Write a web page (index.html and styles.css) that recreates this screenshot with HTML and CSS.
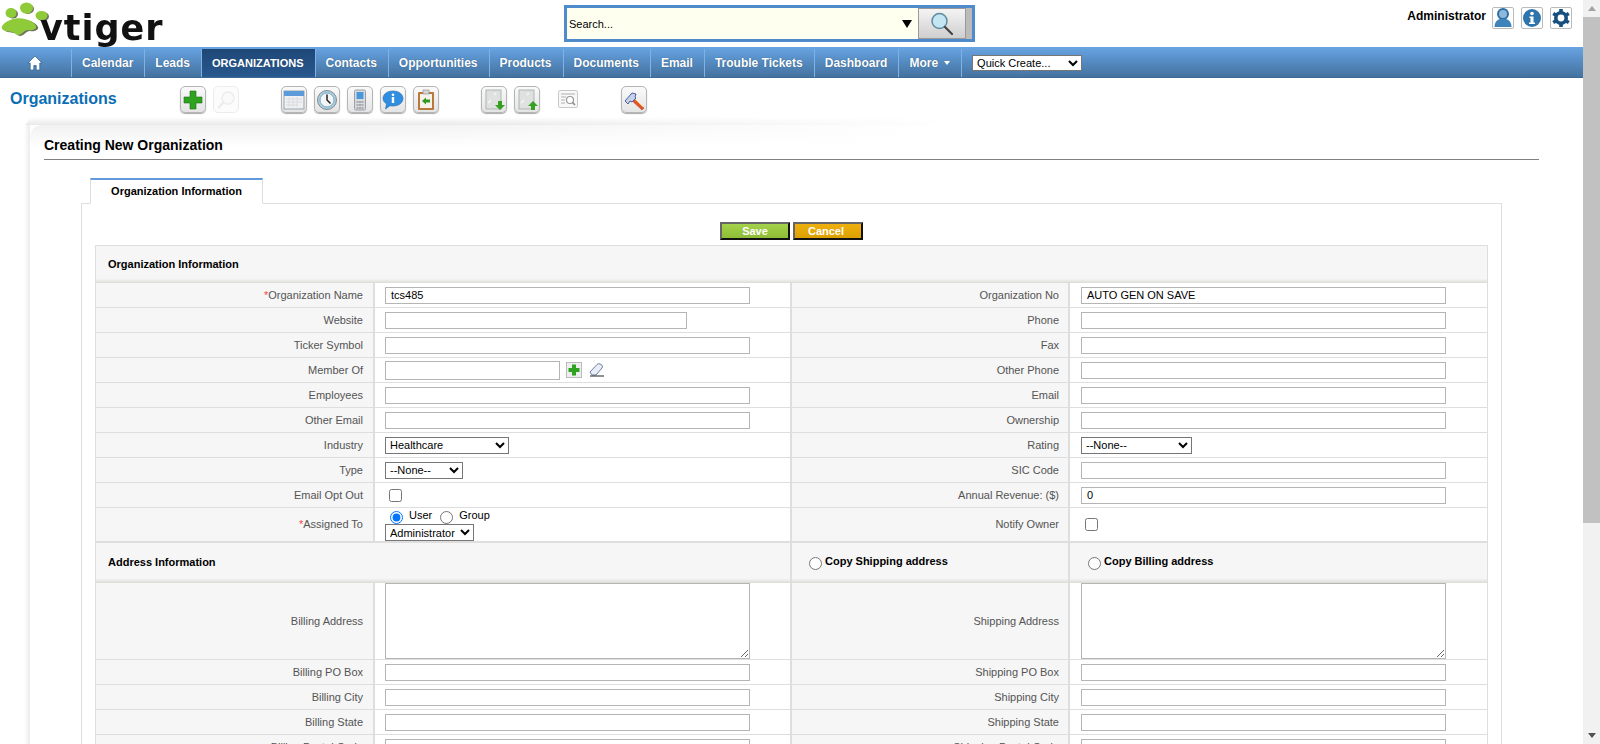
FILE: index.html
```html
<!DOCTYPE html>
<html lang="en">
<head>
    <meta charset="UTF-8">
    <title>Creating New Organization</title>
    <link rel="stylesheet" href="styles.css">
</head>
<body>
<div class="page">
<div class="main">
    <div class="header">
        <div class="logo">
            <svg class="paw" width="52" height="40" viewBox="0 0 52 40">
                <g fill="#2f3a1c" opacity=".7">
                    <ellipse cx="13" cy="13" rx="5" ry="4.500"/>
                    <ellipse cx="28" cy="8" rx="6" ry="5"/>
                    <ellipse cx="43" cy="15.500" rx="6" ry="4.500"/>
                    <path d="M4 26C9 19 20 17 27 19c4 1 9 3 11 7 1 3-4 5-8 4-4 0-6 5-10 5-3 0-3-3-6-3-3-1-12 0-10-6z"/>
                </g>
                <g fill="#8fcb38">
                    <ellipse cx="11" cy="12" rx="5.500" ry="5"/>
                    <ellipse cx="26.500" cy="7" rx="6.500" ry="5.500"/>
                    <ellipse cx="41.500" cy="14.500" rx="6" ry="4.500"/>
                    <path d="M2 25C7 18 18 16 25 18c4 1 9 3 11 7 1 3-4 5-8 4-4 0-6 5-10 5-3 0-3-3-6-3-3-1-12 0-10-6z"/>
                </g>
            </svg>
            <span class="logo-text">vtiger</span>
        </div>
        <div class="search">
            <div class="search-field">
                <span>Search...</span>
                <i class="search-arrow"></i>
            </div>
            <div class="search-btn">
                <svg width="26" height="26" viewBox="0 0 26 26">
                    <circle cx="10.500" cy="10" r="7.500" fill="#c4e6f2" stroke="#5e8ba0" stroke-width="1.500"/>
                    <path d="M16 16l7 7" stroke="#444" stroke-width="2.200" stroke-linecap="round"/>
                </svg>
            </div>
            <div class="search-end"></div>
        </div>
        <div class="user">
            <span class="user-name">Administrator</span>
            <a class="user-icon">
                <svg width="20" height="20" viewBox="0 0 20 20">
                    <circle cx="10" cy="6" r="5" fill="#8db8d8" stroke="#2d6ea6" stroke-width="2"/>
                    <path d="M1.500 19c0-5 3-7.500 5.500-8h6c2.500.5 5.500 3 5.500 8z" fill="#3f83bb"/>
                </svg>
            </a>
            <a class="user-icon">
                <svg width="20" height="20" viewBox="0 0 20 20">
                    <circle cx="10" cy="10" r="9" fill="#2f75ad"/>
                    <circle cx="10" cy="5.500" r="1.800" fill="#fff"/>
                    <path d="M7.500 8.500h4v6h1.500v1.500h-6v-1.500h1.500v-4.500h-1z" fill="#fff"/>
                </svg>
            </a>
            <a class="user-icon">
                <svg width="20" height="20" viewBox="0 0 20 20">
                    <circle cx="10" cy="10" r="5.200" fill="none" stroke="#17507f" stroke-width="3.600"/>
                    <path d="M10 10L10 1M10 10L10 19M10 10L2.200 5.500M10 10L17.800 14.500M10 10L2.200 14.500M10 10L17.800 5.500" stroke="#17507f" stroke-width="3.600" stroke-dasharray="3.500 6 20" stroke-dashoffset="3.500"/>
                </svg>
            </a>
        </div>
    </div>

    <div class="nav">
        <a class="nav-home">
            <svg width="16" height="16" viewBox="0 0 16 16">
                <path d="M8 1L1 8h2.200v7h3.600v-4.500h2.400V15h3.600V8H15z" fill="#fff" stroke="#3a6a98" stroke-width=".8"/>
            </svg>
        </a>
        <a>Calendar</a>
        <a>Leads</a>
        <a class="active">ORGANIZATIONS</a>
        <a>Contacts</a>
        <a>Opportunities</a>
        <a>Products</a>
        <a>Documents</a>
        <a>Email</a>
        <a>Trouble Tickets</a>
        <a>Dashboard</a>
        <a>More <i class="caret"></i></a>
        <select class="quick-create"><option>Quick Create...</option></select>
    </div>

    <div class="toolbar">
        <div class="page-title">Organizations</div>
        <div class="tool-group">
            <a class="tool">
                <svg width="20" height="20" viewBox="0 0 20 20"><path d="M7 1h6v6h6v6h-6v6H7v-6H1V7h6z" fill="#2ea31f" stroke="#1c6e12" stroke-width=".6"/></svg>
            </a>
            <a class="tool faded">
                <svg width="20" height="20" viewBox="0 0 20 20"><circle cx="12" cy="8" r="6" fill="#f6f6f6" stroke="#ddd" stroke-width="1.400"/><path d="M7.500 12.500L2 18" stroke="#ddd" stroke-width="2.400"/></svg>
            </a>
        </div>
        <div class="tool-group">
            <a class="tool">
                <svg width="22" height="22" viewBox="0 0 22 22"><rect x="1" y="2" width="20" height="18" fill="#eef0f2" stroke="#9aa5ad"/><rect x="1" y="2" width="20" height="5" fill="#5b9bdc"/><path d="M3 10h16M3 13h16M3 16h12M6 8v10M10 8v10M14 8v10" stroke="#d8dcdf"/></svg>
            </a>
            <a class="tool">
                <svg width="22" height="22" viewBox="0 0 22 22"><circle cx="11" cy="11" r="9.500" fill="#a9cfe2" stroke="#888"/><circle cx="11" cy="11" r="7" fill="#f4f4f4" stroke="#7aa9c4"/><path d="M11 5.500V11l3.500 3.500" fill="none" stroke="#222" stroke-width="1.500"/></svg>
            </a>
            <a class="tool">
                <svg width="22" height="22" viewBox="0 0 22 22"><rect x="5.500" y="1" width="11" height="20" rx="1.500" fill="#d8dcdf" stroke="#9a9fa4"/><rect x="7.500" y="3" width="7" height="7" fill="#4a98dc"/><path d="M7.500 13h2M10 13h2M12.500 13h2M7.500 16h2M10 16h2M12.500 16h2M7.500 19h2M10 19h2M12.500 19h2" stroke="#777"/></svg>
            </a>
            <a class="tool">
                <svg width="22" height="22" viewBox="0 0 22 22"><path d="M11 2c5.500 0 10 3 10 7.500S16.500 17 11 17c-1 0-2 0-3-.3L3.500 20l1-5C2.500 13.500 1 11.700 1 9.500 1 5 5.500 2 11 2z" fill="#2f8ee0" stroke="#2069ad" stroke-width=".6"/><rect x="9.800" y="8" width="2.400" height="6" fill="#fff"/><circle cx="11" cy="5.800" r="1.300" fill="#fff"/></svg>
            </a>
            <a class="tool">
                <svg width="22" height="22" viewBox="0 0 22 22"><rect x="3" y="3" width="16" height="18" rx="1" fill="#b9783c"/><rect x="5" y="5" width="12" height="14" fill="#f7f3ea"/><rect x="8" y="1" width="6" height="4" fill="#d6d6d6" stroke="#888" stroke-width=".6"/><path d="M7 12l4-3.500v2h4v3h-4v2z" fill="#2f9a1f"/></svg>
            </a>
        </div>
        <div class="tool-group">
            <a class="tool">
                <svg width="22" height="22" viewBox="0 0 22 22"><rect x="3" y="1" width="15" height="19" fill="#dfe1e1" stroke="#b0b4b6"/><path d="M5 14l3-3M11 6l2-2" stroke="#f6f6f6" stroke-width="1.500"/><path d="M15 12h4v4h3l-5 5-5-5h3z" fill="#35a021"/></svg>
            </a>
            <a class="tool">
                <svg width="22" height="22" viewBox="0 0 22 22"><rect x="3" y="1" width="15" height="19" fill="#dfe1e1" stroke="#b0b4b6"/><path d="M5 14l3-3M11 6l2-2" stroke="#f6f6f6" stroke-width="1.500"/><path d="M17 12l5 5h-3v4h-4v-4h-3z" fill="#35a021"/></svg>
            </a>
            <a class="tool-plain">
                <svg width="20" height="18" viewBox="0 0 20 18"><rect x=".5" y=".5" width="19" height="17" rx="1.500" fill="#f8f8f8" stroke="#c9c9c9"/><path d="M3 4h14M3 7h5M3 10h4M3 13h4" stroke="#b0b0b0"/><circle cx="12" cy="10" r="3.500" fill="#fff" stroke="#999" stroke-width="1.200"/><path d="M14.500 12.500L17 15" stroke="#888" stroke-width="1.500"/></svg>
            </a>
            <a class="tool tool-last">
                <svg width="22" height="22" viewBox="0 0 22 22"><path d="M9 8l12 11-2 2L7 10z" fill="#e8541e" stroke="#a33" stroke-width=".5"/><path d="M10 8l10 10" stroke="#f5c16a"/><path d="M2 12l7-8 4 1-1 3 1 1-4 4-2-1-2 3z" fill="#c6d2ec" stroke="#4a5f9c"/></svg>
            </a>
        </div>
    </div>

    <div class="card">
        <div class="card-inner">
            <h2 class="card-title">Creating New Organization</h2>
            <div class="tabs"><a class="tab">Organization Information</a></div>
            <div class="tab-box">
                <div class="actions">
                    <button class="btn btn-save">Save</button>
                    <button class="btn btn-cancel">Cancel</button>
                </div>
                <table class="form">
                    <colgroup><col class="c1"><col class="c2"><col class="c3"><col class="c4"></colgroup>
                    <tr class="section">
                        <td colspan="4">Organization Information</td>
                    </tr>
                    <tr>
                        <td class="lbl"><span class="req">*</span>Organization Name</td>
                        <td class="val"><input class="txt" value="tcs485"></td>
                        <td class="lbl">Organization No</td>
                        <td class="val"><input class="txt" value="AUTO GEN ON SAVE"></td>
                    </tr>
                    <tr>
                        <td class="lbl">Website</td>
                        <td class="val"><input class="txt txt-web"></td>
                        <td class="lbl">Phone</td>
                        <td class="val"><input class="txt"></td>
                    </tr>
                    <tr>
                        <td class="lbl">Ticker Symbol</td>
                        <td class="val"><input class="txt"></td>
                        <td class="lbl">Fax</td>
                        <td class="val"><input class="txt"></td>
                    </tr>
                    <tr>
                        <td class="lbl">Member Of</td>
                        <td class="val member">
                            <input class="txt txt-member">
                            <svg width="16" height="16" viewBox="0 0 16 16"><rect x=".5" y=".5" width="15" height="15" fill="#eee" stroke="#bbb"/><path d="M6 2.500h4V6h3.500v4H10v3.500H6V10H2.500V6H6z" fill="#2ea31f"/></svg>
                            <svg width="16" height="14" viewBox="0 0 16 14"><path d="M1 9l7-7.500c1-1 2.500-1 4 0s2 2 1 3.500L7 12H3z" fill="#e9edf5" stroke="#6a7aa0"/><path d="M1 13h14" stroke="#222"/></svg>
                        </td>
                        <td class="lbl">Other Phone</td>
                        <td class="val"><input class="txt"></td>
                    </tr>
                    <tr>
                        <td class="lbl">Employees</td>
                        <td class="val"><input class="txt"></td>
                        <td class="lbl">Email</td>
                        <td class="val"><input class="txt"></td>
                    </tr>
                    <tr>
                        <td class="lbl">Other Email</td>
                        <td class="val"><input class="txt"></td>
                        <td class="lbl">Ownership</td>
                        <td class="val"><input class="txt"></td>
                    </tr>
                    <tr>
                        <td class="lbl">Industry</td>
                        <td class="val"><select class="sel sel-industry"><option>Healthcare</option></select></td>
                        <td class="lbl">Rating</td>
                        <td class="val"><select class="sel sel-rating"><option>--None--</option></select></td>
                    </tr>
                    <tr>
                        <td class="lbl">Type</td>
                        <td class="val"><select class="sel sel-type"><option>--None--</option></select></td>
                        <td class="lbl">SIC Code</td>
                        <td class="val"><input class="txt"></td>
                    </tr>
                    <tr>
                        <td class="lbl">Email Opt Out</td>
                        <td class="val"><input class="chk" type="checkbox"></td>
                        <td class="lbl">Annual Revenue: ($)</td>
                        <td class="val"><input class="txt" value="0"></td>
                    </tr>
                    <tr class="assign">
                        <td class="lbl"><span class="req">*</span>Assigned To</td>
                        <td class="val">
                            <div class="assign-type">
                                <input type="radio" name="assign" checked><span>User</span>
                                <input type="radio" name="assign"><span>Group</span>
                            </div>
                            <select class="sel sel-user"><option>Administrator</option></select>
                        </td>
                        <td class="lbl">Notify Owner</td>
                        <td class="val"><input class="chk" type="checkbox"></td>
                    </tr>
                    <tr class="section section-split">
                        <td colspan="2" class="split-main">Address Information</td>
                        <td class="split-a"><input type="radio" name="copy1"><span>Copy Shipping address</span></td>
                        <td class="split-b"><input type="radio" name="copy2"><span>Copy Billing address</span></td>
                    </tr>
                    <tr class="tall">
                        <td class="lbl">Billing Address</td>
                        <td class="val"><textarea class="area"></textarea></td>
                        <td class="lbl">Shipping Address</td>
                        <td class="val"><textarea class="area"></textarea></td>
                    </tr>
                    <tr>
                        <td class="lbl">Billing PO Box</td>
                        <td class="val"><input class="txt"></td>
                        <td class="lbl">Shipping PO Box</td>
                        <td class="val"><input class="txt"></td>
                    </tr>
                    <tr>
                        <td class="lbl">Billing City</td>
                        <td class="val"><input class="txt"></td>
                        <td class="lbl">Shipping City</td>
                        <td class="val"><input class="txt"></td>
                    </tr>
                    <tr>
                        <td class="lbl">Billing State</td>
                        <td class="val"><input class="txt"></td>
                        <td class="lbl">Shipping State</td>
                        <td class="val"><input class="txt"></td>
                    </tr>
                    <tr>
                        <td class="lbl">Billing Postal Code</td>
                        <td class="val"><input class="txt"></td>
                        <td class="lbl">Shipping Postal Code</td>
                        <td class="val"><input class="txt"></td>
                    </tr>
                </table>
            </div>
        </div>
    </div>
</div>
<div class="scrollbar">
    <i class="sb-up"></i>
    <div class="sb-thumb"></div>
    <i class="sb-down"></i>
</div>
</div>
</body>
</html>
```

FILE: styles.css
```css
html,body{margin:0;padding:0;height:100%;overflow:hidden;}
body{background:#fff;font-family:"Liberation Sans",Arial,sans-serif;font-size:11px;color:#000;}
a{text-decoration:none;color:inherit;}

.page{display:flex;height:744px;}
.main{flex:1;min-width:0;overflow:hidden;}

/* scrollbar */
.scrollbar{width:17px;background:#f1f1f1;display:flex;flex-direction:column;align-items:center;}
.sb-thumb{width:17px;height:506px;background:#c1c1c1;margin-top:6px;}
.sb-up{width:0;height:0;margin-top:6px;border:4px solid transparent;border-top:0;border-bottom:5px solid #a3a3a3;}
.sb-down{width:0;height:0;margin-top:auto;margin-bottom:6px;border:4px solid transparent;border-bottom:0;border-top:5px solid #505050;}

/* header */
.header{display:flex;height:47px;}
.logo{width:564px;display:flex;align-items:flex-start;}
.paw{margin-top:1px;flex:none;filter:blur(.3px);}
.logo-text{margin-left:-12px;margin-top:9px;font-family:"DejaVu Sans",sans-serif;font-weight:bold;font-size:35px;line-height:38px;letter-spacing:1px;color:#111;filter:blur(.5px);}
.search{width:411px;height:37px;margin-top:5px;box-sizing:border-box;border:3px solid #4f8bca;display:flex;background:#fffff0;}
.search-field{flex:1;display:flex;align-items:center;justify-content:space-between;padding:0 6px 0 2px;}
.search-arrow{width:0;height:0;border:5px solid transparent;border-bottom:0;border-top:8px solid #000;}
.search-btn{width:48px;display:flex;align-items:center;justify-content:center;background:linear-gradient(#f4f4f4,#cfcfcf);border:1px solid #999;box-sizing:border-box;}
.search-end{width:6px;background:#bbb;}
.user{flex:1;display:flex;justify-content:flex-end;align-items:flex-start;padding:7px 11px 0 0;gap:7px;}
.user-name{font-weight:bold;font-size:12px;line-height:18px;margin-right:-1px;}
.user-icon{width:22px;height:22px;box-sizing:border-box;border:1px solid #bbb;border-radius:2px;display:flex;align-items:center;justify-content:center;background:#fff;}

/* main menu */
.nav{display:flex;height:31px;background:linear-gradient(#69a5e2,#5a92cc 35%,#44729e);border-bottom:1px solid #3b6a96;box-sizing:border-box;align-items:stretch;}
.nav a{display:flex;align-items:center;padding:0 11px 0 10px;margin-top:2px;border-right:1px solid #7fb3e6;font-size:12px;font-weight:bold;color:#fff;text-shadow:0 0 1px #2a4f75;}
.nav .nav-home{width:72px;box-sizing:border-box;padding:0 0 0 27px;}
.nav a.active{background:linear-gradient(#1e4776,#29588f);font-size:11px;letter-spacing:0;}
.caret{display:inline-block;width:0;height:0;margin-left:6px;border:3.500px solid transparent;border-bottom:0;border-top:4px solid #fff;}
.quick-create{width:110px;height:16px;margin:8px 0 0 10px;font:11px "Liberation Sans",sans-serif;background:#fff;}

/* tools */
.toolbar{display:flex;height:39px;align-items:flex-start;padding-top:8px;box-sizing:border-box;}
.page-title{width:170px;padding-left:10px;font-size:16px;font-weight:bold;color:#0a6eb4;line-height:24px;flex:none;margin-top:1px;}
.tool-group{display:flex;gap:7px;margin-right:42px;align-items:flex-start;}
.tool{width:26px;height:27px;box-sizing:border-box;border:1px solid #b5b5b5;border-radius:5px;background:linear-gradient(#fafafa,#e4e4e4);display:flex;align-items:center;justify-content:center;box-shadow:0 1px 1px #aaa;}
.tool.faded{opacity:.55;border-color:#ddd;box-shadow:none;background:#fafafa;}
.tool-plain{margin:4px 0 0 11px;display:flex;}
.tool-last{margin-left:36px;}

/* card */
.card{margin-left:24px;padding:8px 0 0 6px;border-radius:14px 0 0 0;background:
    linear-gradient(to right,rgba(255,255,255,0) 30%,#fff 60%) top left/100% 8px no-repeat,
    linear-gradient(#fff,#e9e9e9) top left/100% 8px no-repeat,
    linear-gradient(to right,#fff,#ececec) top left/6px 100% no-repeat;
}
.card-inner{background:
    linear-gradient(to right,rgba(255,255,255,0) 20%,#fff 58%) top left/100% 22px no-repeat,
    linear-gradient(#f1f1f1,#fff) top left/100% 22px no-repeat;
    background-color:#fff;border-radius:12px 0 0 0;padding:0 44px 0 14px;min-height:700px;}
.card-title{margin:0;height:35px;box-sizing:border-box;padding-top:12px;font-size:14px;line-height:16px;font-weight:bold;border-bottom:1px solid #808080;}

.tabs{display:flex;padding:18px 0 0 46px;margin-bottom:-1px;position:relative;}
.tab{width:173px;height:26px;box-sizing:border-box;border:1px solid #dedede;border-top:2px solid #6199dd;border-bottom:1px solid #fff;background:#fff;text-align:center;font-weight:bold;line-height:23px;}
.tab-box{margin:0 37px;border:1px solid #dedede;padding:18px 13px 0;}
.actions{display:flex;justify-content:center;gap:3px;margin-bottom:5px;}
.btn{width:70px;height:18px;padding:0;box-sizing:border-box;border:2px solid;border-color:#666 #111 #111 #666;font:bold 11px "Liberation Sans",sans-serif;color:#fff;}
.btn-save{background:linear-gradient(#a4d24a,#8ebc36);}
.btn-cancel{background:linear-gradient(#eeb00f,#dca100);padding-right:4px;}

/* form table */
.form{border-collapse:separate;border-spacing:0;table-layout:fixed;width:1393px;border:1px solid #dedede;border-bottom:0;}
.c1{width:279px;}
.c2{width:417px;}
.c3{width:278px;}
.c4{width:417px;}
.form td{height:25px;padding:0;box-sizing:border-box;border-bottom:1px solid #dedede;}
.section td{height:37px;background:linear-gradient(#f6f6f6 88%,#dcdcd6);font-weight:bold;padding:0 0 2px 12px;border-bottom:0;}
.section-split td{height:42px;border-top:2px solid #dedede;}
.section-split .split-main{padding-left:12px;border-right:2px solid #dedede;}
.section-split .split-a{padding-left:17px;border-right:2px solid #dedede;}
.section-split .split-b{padding-left:18px;}
.section-split input{margin:3px 3px 0 0;vertical-align:middle;}
.form .lbl{background:#f6f6f6;text-align:right;padding-right:10px;color:#545454;border-right:2px solid #dedede;}
.form td:nth-child(3).lbl{padding-right:9px;}
.form .val{padding-left:10px;}
.form td:nth-child(4).val{padding-left:11px;}
.form td:nth-child(2).val{border-right:2px solid #dedede;}
.req{color:#f44;}
.txt{display:block;width:365px;height:17px;box-sizing:border-box;border:1px solid #b5b5b5;padding:0 0 0 5px;margin:0;font:11px "Liberation Sans",sans-serif;color:#000;background:#fff;outline:0;}
.txt-web{width:302px;}
.member{white-space:nowrap;}
.txt-member{display:inline-block;width:175px;height:19px;vertical-align:middle;}
.member svg{vertical-align:middle;margin-left:3px;}
.member svg:last-child{margin-left:4px;}
.sel{display:block;height:17px;font:11px "Liberation Sans",sans-serif;background:#fff;padding:0;margin:0;}
.sel-industry{width:124px;}
.sel-type{width:78px;}
.sel-rating{width:111px;}
.sel-user{width:89px;}
.chk{display:block;margin:0 0 0 4px;width:13px;height:13px;}
.assign td{height:33px;border-bottom:0;}
.assign .lbl{padding-bottom:2px;}
.assign-type{display:flex;align-items:flex-start;height:16px;padding-left:5px;}
.assign-type input{margin:3px 6px 0 0;width:13px;height:13px;}
.assign-type span{margin:2px 8px 0 0;line-height:11px;}
.tall td{height:77px;}
.area{display:block;width:365px;height:76px;box-sizing:border-box;border:1px solid #b5b5b5;margin:0;padding:0;background:#fff;}
```
